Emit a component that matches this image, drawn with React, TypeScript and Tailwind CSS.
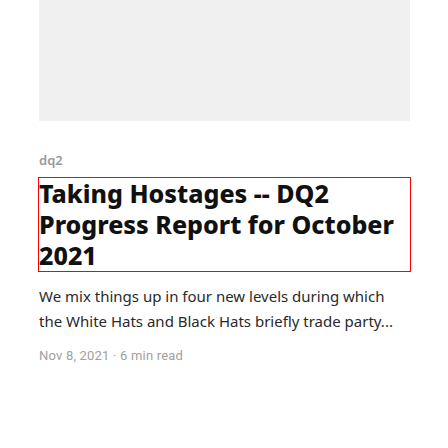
export default function App() {
  return (
    <div className="w-[448px] h-[448px] bg-white pl-[39px] pr-[38px]" style={{ fontFamily: '"Noto Sans", sans-serif' }}>
      <div className="h-[121px] bg-[#f0f0f0]" />
      <div className="pt-[29px] text-[13px] leading-[20px] font-semibold text-[#999999]">dq2</div>
      <h2 className="mt-[8px] outline outline-1 outline-[#ff0000] text-[25px] leading-[31px] font-extrabold text-[#111111]">
        Taking Hostages -- DQ2 Progress Report for October 2021
      </h2>
      <p className="mt-[13px] text-[15px] leading-[25px] text-[#2a2a2a]">
        We mix things up in four new levels during which the White Hats and Black Hats briefly trade party...
      </p>
      <div className="mt-[14px] text-[13px] leading-[16px] tracking-[0.2px] text-[#a0a0a0]" style={{ fontFamily: 'Roboto, sans-serif' }}>
        Nov 8, 2021 · 6 min read
      </div>
    </div>
  );
}
